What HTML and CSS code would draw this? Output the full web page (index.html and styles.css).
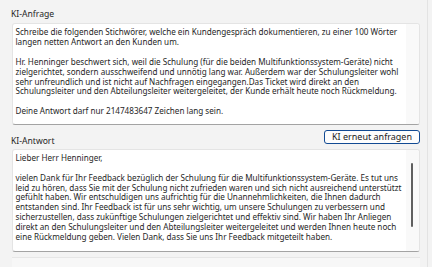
FILE: index.html
```html
<!DOCTYPE html>
<html lang="de">
<head>
<meta charset="utf-8">
<link rel="stylesheet" href="styles.css">
</head>
<body>
<div class="app">
  <div class="main">
    <div class="label">KI-Anfrage</div>
    <div class="box box-q">
      <div class="text">
        <div class="ln">Schreibe die folgenden Stichwörer, welche ein Kundengespräch dokumentieren, zu einer 100 Wörter</div>
        <div class="ln">langen netten Antwort an den Kunden um.</div>
        <div class="ln">&nbsp;</div>
        <div class="ln">Hr. Henninger beschwert sich, weil die Schulung (für die beiden Multifunktionssystem-Geräte) nicht</div>
        <div class="ln">zielgerichtet, sondern ausschweifend und unnötig lang war. Außerdem war der Schulungsleiter wohl</div>
        <div class="ln">sehr unfreundlich und ist nicht auf Nachfragen eingegangen.Das Ticket wird direkt an den</div>
        <div class="ln">Schulungsleiter und den Abteilungsleiter weitergeleitet, der Kunde erhält heute noch Rückmeldung.</div>
        <div class="ln">&nbsp;</div>
        <div class="ln">Deine Antwort darf nur 2147483647 Zeichen lang sein.</div>
      </div>
      <div class="track"></div>
    </div>
    <div class="row">
      <div class="label label-a">KI-Antwort</div>
      <button class="btn">KI erneut anfragen</button>
    </div>
    <div class="box box-a">
      <div class="text">
        <div class="ln">Lieber Herr Henninger,</div>
        <div class="ln">&nbsp;</div>
        <div class="ln">vielen Dank für Ihr Feedback bezüglich der Schulung für die Multifunktionssystem-Geräte. Es tut uns</div>
        <div class="ln">leid zu hören, dass Sie mit der Schulung nicht zufrieden waren und sich nicht ausreichend unterstützt</div>
        <div class="ln">gefühlt haben. Wir entschuldigen uns aufrichtig für die Unannehmlichkeiten, die Ihnen dadurch</div>
        <div class="ln">entstanden sind. Ihr Feedback ist für uns sehr wichtig, um unsere Schulungen zu verbessern und</div>
        <div class="ln">sicherzustellen, dass zukünftige Schulungen zielgerichtet und effektiv sind. Wir haben Ihr Anliegen</div>
        <div class="ln">direkt an den Schulungsleiter und den Abteilungsleiter weitergeleitet und werden Ihnen heute noch</div>
        <div class="ln">eine Rückmeldung geben. Vielen Dank, dass Sie uns Ihr Feedback mitgeteilt haben.</div>
      </div>
      <div class="track"><div class="thumb"></div></div>
    </div>
    <div class="next"></div>
  </div>
</div>
</body>
</html>
```
FILE: styles.css
```css
html, body {
  margin: 0;
  padding: 0;
  background: #f3f3f3;
  overflow: hidden;
}
* { box-sizing: border-box; }
.app {
  width: 432px;
  height: 267px;
  font-family: "Noto Sans", "Open Sans", sans-serif;
  font-size: 8.15px;
  color: #262626;
  overflow: hidden;
}
.main {
  width: 428px;
  height: 267px;
  border-right: 1px solid #e3e3e3;
  padding: 9px 7px 0 12px;
  display: flex;
  flex-direction: column;
}
.label {
  font-size: 8.6px;
  line-height: 10px;
  height: 10px;
  margin-left: -1px;
  margin-bottom: 4px;
  white-space: nowrap;
}
.box {
  background: #ffffff;
  border: 1px solid #e4e4e4;
  border-bottom-color: #a3a3a3;
  border-radius: 3px;
  display: flex;
  overflow: hidden;
}
.box-q { height: 105px; }
.box-a { height: 107px; }
.text {
  flex: 1;
  padding: 3px 0 0 2.5px;
  line-height: 9.9px;
  overflow: hidden;
}
.ln { white-space: nowrap; }
.track {
  width: 13px;
  background: #f9f9f9;
  position: relative;
}
.thumb {
  position: absolute;
  left: 5px;
  top: 13px;
  width: 2px;
  height: 64px;
  border-radius: 1px;
  background: #5f5f5f;
}
.row {
  height: 20px;
  margin-top: 5px;
  display: flex;
  justify-content: space-between;
  align-items: flex-start;
}
.label-a {
  align-self: flex-end;
  margin-bottom: 3px;
}
.btn {
  height: 14px;
  width: 96px;
  padding: 0;
  font: inherit;
  font-size: 9px;
  line-height: 12px;
  color: #1b1b1b;
  background: #fdfdfd;
  border: 1px solid #124a93;
  border-radius: 3px;
}
.next {
  margin-top: 5px;
  height: 10px;
  border-top: 1px solid #e6e6e6;
  background: #f7f7f7;
}
```
